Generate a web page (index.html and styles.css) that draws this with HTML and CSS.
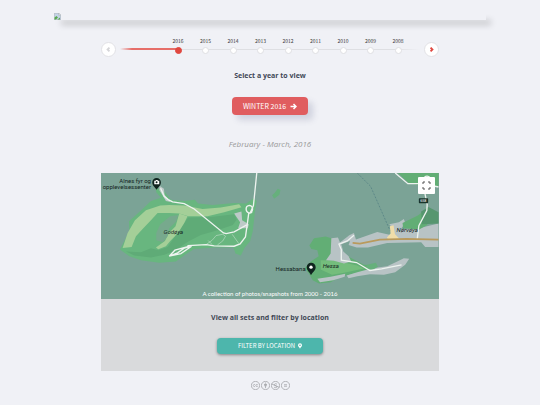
FILE: index.html
```html
<!DOCTYPE html>
<html lang="en">

<head>
    <meta charset="UTF-8" />
    <meta name="viewport" content="width=device-width, initial-scale=1.0" />
    <title>Winter 2016</title>
    <link rel="stylesheet" href="styles.css">
</head>

<body>
    <header class="banner">
        <svg class="banner-icon" viewBox="0 0 14 14" aria-hidden="true">
            <path fill="#c3d3e6" stroke="#9aa1a6" d="M.5.5h9l4 4v9H.5z" />
            <path fill="#fff" stroke="#9aa1a6" d="M9.500.5v4h4z" />
            <path fill="#58a84f" d="M1 13V9l4-3 3 3-4 4zM7 13l5-4v4z" />
        </svg>
    </header>

    <main class="container">
        <nav class="timeline" aria-label="Years">
            <button class="timeline-arrow prev" type="button" aria-label="Previous" disabled>
                <svg viewBox="0 0 14 14"><path d="M8 5 6 7l2 2" /></svg>
            </button>
            <div class="events">
                <a class="selected" href="#2016">2016</a>
                <a href="#2015">2015</a>
                <a href="#2014">2014</a>
                <a href="#2013">2013</a>
                <a href="#2012">2012</a>
                <a href="#2011">2011</a>
                <a href="#2010">2010</a>
                <a href="#2009">2009</a>
                <a href="#2008">2008</a>
            </div>
            <button class="timeline-arrow next" type="button" aria-label="Next">
                <svg viewBox="0 0 14 14"><path d="m6 5 2 2-2 2" /></svg>
            </button>
        </nav>

        <section class="year" id="2016">
            <h2>Select a year to view</h2>
            <a class="btn btn-red" href="#winter">WINTER 2016
                <svg class="arrow-icon" viewBox="0 0 14 14"><path d="M1 7h11M7 2l5 5-5 5" /></svg>
            </a>
            <p class="dates">February - March, 2016</p>
        </section>

        <section class="map">
            <svg class="map-canvas" viewBox="0 0 1014 380" role="img" aria-label="Map of the islands">
                <!-- Godoya -->
                <path fill="#68b67f" d="M57 230 85 175 84 145 125 108 150 84 180 74 166 58 164 46 185 48 210 80 250 84 282 80 292 92 335 96 400 90 436 92 458 76 468 84 462 120 456 175 448 205 432 224 420 248 404 242 398 224 340 224 280 228 255 244 225 266 175 270 120 262 85 250z" />
                <path fill="#5fab77" d="M75 236 120 238 150 226 172 232 200 222 230 180 262 134 330 132 400 124 408 140 396 156 350 172 300 186 262 206 220 234 190 246 150 254 100 248z" />
                <path fill="#a4cf98" d="M65 225 80 180 102 142 135 112 178 98 205 96 250 98 305 108 360 104 415 94 422 103 370 118 320 130 262 130 235 122 205 120 170 120 150 142 125 168 105 190 92 222z" />
                <path fill="#a4cf98" d="M235 122 260 130 250 150 238 170 222 190 208 204 195 220 172 229 165 224 192 204 204 180 224 160z" />
                <path fill="#77a98d" d="M178 154 208 130 232 126 226 146 205 166 200 190 186 208 166 202 166 180z" />
                <path fill="#bdc9c8" d="M400 122 422 116 424 142 444 154 441 166 412 166 418 148zM176 38l13 9 2 18 10 12 8 10-14-3-12-20-8-13z" />
                <path class="road" d="M179 46 190 70 202 80 215 87 250 92 280 108 368 180 376 182 400 177 438 156" />
                <path class="road" d="M205 250 222 232 258 222 262 218 316 215 340 219 400 220 418 213 434 192 440 150 444 120M205 250 240 242 272 220 250 226 230 240z" />
                <path class="road" d="M454 116c-4 8-18 4-18-8s14-13 18-5-2 16-6 17l10-22 10-98" />
                <path class="road thin" d="M316 215 334 202 346 188 366 184 374 190 366 204 350 216M394 184l20 28M322 203l12 12" />
                <path fill="#66b07c" d="m514 67 8-8 9-12 8 4-3 14-10 8-6 4z" />

                <!-- Hessa -->
                <path fill="#62ae75" d="M626 218 640 196 675 191 692 196 718 214 730 244 790 276 830 278 818 292 760 302 720 312 690 328 655 332 636 322 626 304 612 286 630 266 654 250 650 232 632 228z" />
                <path fill="#74bd7c" d="M660 262 708 264 770 278 790 287 730 300 694 306 660 290z" />
                <path fill="#b8c3c5" d="M692 196 712 194 718 209 746 187 760 180 766 200 830 177 870 186 880 170 866 154 895 148 910 138 914 150 900 170 964 164 1014 152V222H974L962 208 860 210 802 224 768 224 744 216 748 204 722 214 728 236 744 250 752 266 730 272 700 264 676 262 690 242z" />
                <path fill="#b8c3c5" d="M738 308 770 298 815 286 860 280 890 266 910 256 926 258 914 276 884 298 850 306 808 304 770 310 744 316zM650 318 690 312 734 303 732 312 698 322 658 328z" />
                <path fill="#66b07c" d="m798 276 28-6 6 12-18 10-16-5z" />
                <path fill="#f0dda9" d="m868 160 11-3 4 26 15 16-34 3-5-8 11-12z" />
                <path fill="#62ae75" d="m906 150 46-22 28-22 8 26-8 24-24 14-48-4z" />
                <path fill="#56966f" d="m962 116 22-14 30 16v34l-50 2z" />
                <path fill="#62ae75" d="M892 0h122v38l-30 6-60-15z" />
                <path class="road" d="m884 0 38 32h45l47 10M968 35l12 60-1 18-24 45-5 42" />
                <path class="road" d="m760 187-20 17-25 10 7 16v32l46 7 40 24 35-5 60-12M972 34c-12-24 14-36 22-10" />
                <path class="highway" d="m756 210 22 2 60-12 80-2 96 2" />
                <path class="ferry" d="m770 0 40 40 58 132" />
                <rect x="955" y="76" width="28" height="15" rx="2" fill="#19342b" />
                <text x="959" y="88" class="route">658</text>

                <path fill="#10241f" d="M167 50c-5-7-13-12-13-22a13 13 0 0 1 26 0c0 10-8 15-13 22zM631 307c-3-9-13-13-13-24a13 13 0 0 1 27 0c0 11-10 15-14 24z" />
                <path fill="#fff" d="M160 23h4l1-2h5l1 2h4v11h-15z" />
                <circle cx="167" cy="28" r="3" fill="#10241f" />
                <circle cx="631" cy="283" r="5" fill="#fff" />
                <text x="150" y="31" text-anchor="end">Alnes fyr og</text>
                <text x="150" y="49" text-anchor="end">opplevelsessenter</text>
                <text x="615" y="295" text-anchor="end">Hessabana</text>
                <text x="188" y="183" class="place">Godøya</text>
                <text x="666" y="286" class="place">Hessa</text>
                <text x="888" y="178" class="place">Nørvøya</text>
            </svg>
            <button class="fullscreen" type="button" aria-label="Toggle fullscreen">
                <svg viewBox="0 0 18 18"><path d="M6 2H2v4M12 2h4v4M16 12v4h-4M6 16H2v-4" /></svg>
            </button>
            <p class="caption">A collection of photos/snapshots from 2000 - 2016</p>
        </section>

        <section class="filter">
            <h2>View all sets and filter by location</h2>
            <a class="btn btn-teal" href="#location">FILTER BY LOCATION
                <svg class="pin-icon" viewBox="0 0 10 14"><path d="M5 14C4 10 0 9 0 5a5 5 0 0 1 10 0c0 4-4 5-5 9zM5 3a2 2 0 1 0 0 4 2 2 0 0 0 0-4z" /></svg>
            </a>
        </section>
    </main>

    <footer class="licence">
        <svg viewBox="0 0 24 24"><circle cx="12" cy="12" r="11" /><path d="M11 10c-3-2-5 0-5 2s2 4 5 2M18 10c-3-2-5 0-5 2s2 4 5 2" /></svg>
        <svg viewBox="0 0 24 24"><circle cx="12" cy="12" r="11" /><path d="M12 4v3M8 9h8M12 9v10M10 9v5M14 9v5" /></svg>
        <svg viewBox="0 0 24 24"><circle cx="12" cy="12" r="11" /><path d="M16 9c-2-3-7-2-7 1s7 2 7 5-6 4-8 1M2 8l20 9" /></svg>
        <svg viewBox="0 0 24 24"><circle cx="12" cy="12" r="11" /><path d="M8 10h8M8 14h8" /></svg>
    </footer>
</body>

</html>
```
FILE: styles.css
```css
* {
    box-sizing: border-box;
}

body {
    margin: 0;
    padding-top: 13px;
    background-color: #f0f1f6;
    color: #414856;
    font-family: "Noto Sans CJK SC", "Open Sans", sans-serif;
    font-size: 7px;
    line-height: 10px;
}

h2 {
    margin: 0;
    font-family: "Open Sans", sans-serif;
    font-size: 7px;
    font-weight: bold;
    line-height: 12px;
}

.banner {
    width: 80%;
    height: 7px;
    margin: 0 auto;
    box-shadow: 6px 6px 6px -1px rgba(0, 0, 0, 0.18);
    background-color: #f0f1f6;
}

.banner-icon {
    display: block;
    width: 7px;
    height: 7px;
}

.container {
    width: 62.5%;
    margin: 0 auto;
}

/* timeline */
.timeline {
    display: flex;
    align-items: flex-end;
    gap: 4px;
    padding-top: 16px;
}

.timeline-arrow {
    flex: none;
    width: 15px;
    height: 15px;
    margin-bottom: -1px;
    padding: 0;
    border: 1px solid #e2e2e6;
    border-radius: 50%;
    background-color: #fff;
}

.timeline-arrow svg {
    display: block;
    width: 13px;
    height: 13px;
    fill: none;
    stroke: #e0473f;
    stroke-width: 2;
}

.timeline-arrow.prev svg {
    stroke: #d5d5d8;
}

.events {
    display: flex;
    flex: 1;
    padding: 0 8px 0 44px;
    background:
        linear-gradient(to right, rgba(230, 110, 105, 0), #e66e69 12px) 0 12px / 58px 2px no-repeat,
        linear-gradient(to right, #dedfe3 90%, #f0f1f6) 58px 13px / 242px 1px no-repeat;
}

.events a {
    flex: 1;
    height: 20px;
    color: #383838;
    font-size: 5px;
    line-height: 9px;
    text-align: center;
    text-decoration: none;
}

.events a::after {
    content: "";
    display: block;
    width: 5px;
    height: 5px;
    margin: 2px auto 0;
    border: 1px solid #dfdfe2;
    border-radius: 50%;
    background-color: #fff;
}

.events a.selected::after {
    border-color: #e0473f;
    background-color: #e0473f;
}

/* selected year */
.year {
    padding-top: 14px;
    text-align: center;
}

.btn {
    display: flex;
    align-items: center;
    justify-content: center;
    gap: 4px;
    width: 76px;
    height: 18px;
    margin: 15px auto 0;
    border-radius: 4px;
    color: #fff;
    text-decoration: none;
}

.btn-red {
    background-color: #e05d5f;
    box-shadow: 5px 5px 6px rgba(80, 90, 130, 0.2);
}

.arrow-icon {
    width: 7px;
    height: 7px;
    fill: none;
    stroke: #fff;
    stroke-width: 3;
}

.dates {
    margin: 23px 0;
    color: #999;
    font-family: "Open Sans", sans-serif;
    font-size: 8px;
    font-style: italic;
    line-height: 12px;
}

/* map */
.map {
    position: relative;
    background-color: #7ba396;
}

.map-canvas {
    display: block;
    width: 100%;
    fill: #14231e;
    font-family: Roboto, sans-serif;
    font-size: 18px;
}

.map-canvas .place {
    font-style: italic;
}

.map-canvas .route {
    fill: #fff;
    font-size: 11px;
}

.road {
    fill: none;
    stroke: #edf3ef;
    stroke-width: 4;
}

.road.thin {
    stroke-width: 2;
    opacity: 0.6;
}

.highway {
    fill: none;
    stroke: #b99a5c;
    stroke-width: 5;
}

.ferry {
    fill: none;
    stroke: #4d7a80;
    stroke-width: 2;
    stroke-dasharray: 6 4;
}

.fullscreen {
    position: absolute;
    top: 4px;
    right: 4px;
    width: 17px;
    height: 17px;
    padding: 4px;
    border: none;
    border-radius: 1px;
    background-color: #fff;
}

.fullscreen svg {
    display: block;
    width: 9px;
    height: 9px;
    fill: none;
    stroke: #555;
    stroke-width: 2;
}

.caption {
    position: absolute;
    right: 0;
    bottom: 0;
    left: 0;
    margin: 0;
    color: #fff;
    font-family: Lato, sans-serif;
    font-size: 6px;
    text-align: center;
}

/* filter */
.filter {
    padding: 13px 0 17px;
    background-color: #d9dadc;
    text-align: center;
}

.btn-teal {
    width: 106px;
    height: 16px;
    margin-top: 14px;
    background-color: #4db6ac;
    box-shadow: 0 1px 3px rgba(0, 0, 0, 0.4);
    font-size: 6px;
    gap: 3px;
}

.pin-icon {
    width: 4px;
    height: 6px;
    fill: #fff;
    fill-rule: evenodd;
}

.licence {
    display: flex;
    justify-content: center;
    gap: 1px;
    padding: 10px 0;
}

.licence svg {
    width: 9px;
    height: 9px;
    fill: none;
    stroke: #a0a1a5;
    stroke-width: 2;
}
```
